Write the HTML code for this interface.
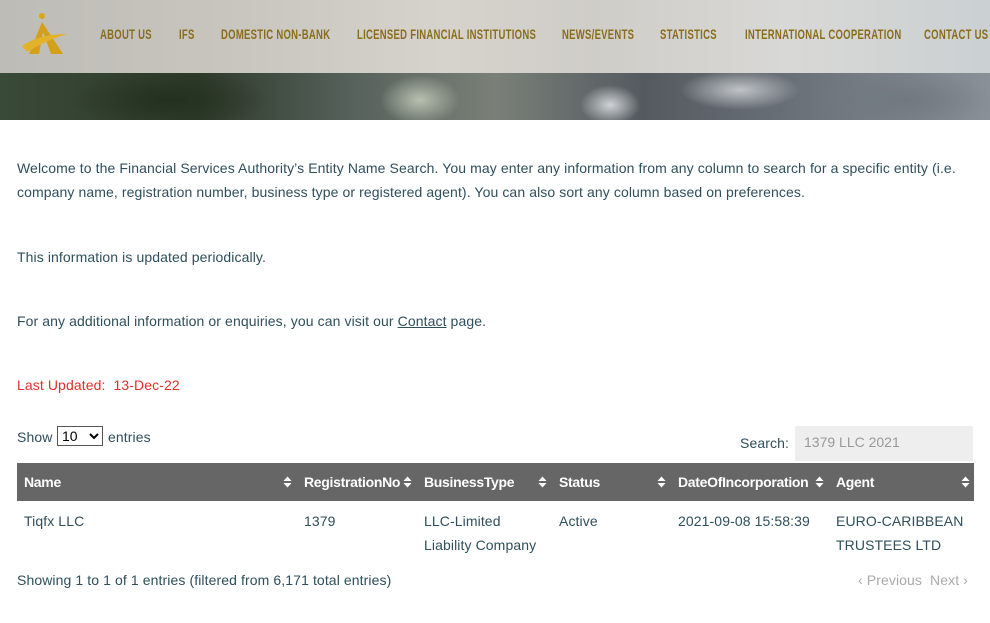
<!DOCTYPE html>
<html><head><meta charset="utf-8"><style>
*{margin:0;padding:0;box-sizing:border-box}
body{width:990px;height:623px;overflow:hidden;background:#fff;font-family:"Liberation Sans",sans-serif;color:#2f4f5c;font-size:14px;position:relative}
.hdr{position:absolute;left:0;top:0;width:990px;height:120px;overflow:hidden;
background:
radial-gradient(ellipse 40px 25px at 420px 100px,#b8c0b0 0,transparent 100%),
radial-gradient(ellipse 30px 20px at 610px 105px,#d0d4d8 0,transparent 100%),
radial-gradient(ellipse 60px 20px at 740px 90px,#c0c4c8 0,transparent 100%),
radial-gradient(ellipse 100px 30px at 170px 100px,#24301f 0,transparent 100%),
radial-gradient(ellipse 90px 30px at 900px 100px,#707880 0,transparent 100%),
linear-gradient(90deg,#3a4a38 0,#2e3a2a 20%,#55605a 35%,#7a8078 50%,#555a60 65%,#6a7078 80%,#8a9098 100%)}
.ov{position:absolute;left:0;top:0;width:990px;height:73px;background:
linear-gradient(90deg,#bdbcb6 0,#c9c6bf 25%,#d6d3cc 45%,#cfcdc8 60%,#d8d8d6 80%,#cbd0d2 100%)}
.nav{position:absolute;top:26px;font-family:"Liberation Sans",sans-serif;font-size:14px;font-weight:bold;color:#8a6d1c;letter-spacing:0.4px;transform:scaleX(0.68);transform-origin:left;white-space:nowrap}
p{position:absolute;left:17px;line-height:24px;font-size:14px;letter-spacing:0.1px}
a{color:#2f4f5c}
.red{color:#e0302a}
select{position:absolute;left:57px;top:426px;width:46px;height:20px;font-size:14px;border:1px solid #555;background:#fff;font-family:"Liberation Sans",sans-serif}
.th{position:absolute;left:17px;top:463px;width:957px;height:38px;background:#666}
.th span{position:absolute;top:11px;color:#fff;font-weight:bold;font-size:14px;letter-spacing:-0.3px}
.th svg{position:absolute;top:13px}
.td{position:absolute;font-size:14px;line-height:24px;letter-spacing:0.1px}
.gray{color:#aaa}
</style></head><body>
<div class="hdr"><div class="ov"></div>
<svg style="position:absolute;left:17px;top:12px" width="52" height="44" viewBox="0 0 52 44"><circle cx="25" cy="4" r="3" fill="#d8a81c"/><path d="M25 10 L12 42 L22 42 L26 20 L34 42 L46 42 Z" fill="#d4a01a"/><path d="M5 34 Q22 22 50 22 Q30 28 10 40 Z" fill="#e2b22a"/></svg>
<div class="nav" style="left:100px">ABOUT US</div>
<div class="nav" style="left:179px">IFS</div>
<div class="nav" style="left:221px">DOMESTIC NON-BANK</div>
<div class="nav" style="left:357px">LICENSED FINANCIAL INSTITUTIONS</div>
<div class="nav" style="left:562px">NEWS/EVENTS</div>
<div class="nav" style="left:660px">STATISTICS</div>
<div class="nav" style="left:745px">INTERNATIONAL COOPERATION</div>
<div class="nav" style="left:924px">CONTACT US</div>
</div>
<p style="top:156px;width:960px">Welcome to the Financial Services Authority’s Entity Name Search. You may enter any information from any column to search for a specific entity (i.e. company name, registration number, business type or registered agent). You can also sort any column based on preferences.</p>
<p style="top:245px">This information is updated periodically.</p>
<p style="top:309px">For any additional information or enquiries, you can visit our <a href="#">Contact</a> page.</p>
<p class="red" style="top:373px">Last Updated:&nbsp; 13-Dec-22</p>
<p style="top:425px">Show</p><select><option>10</option></select><p style="left:108px;top:425px">entries</p>
<p style="left:740px;top:431px">Search:</p>
<div style="position:absolute;left:795px;top:426px;width:178px;height:35px;background:#eee;color:#999;padding:8px 9px;font-size:14px">1379 LLC 2021</div>
<div class="th">
<span style="left:7px">Name</span>
<span style="left:287px">RegistrationNo</span>
<span style="left:407px">BusinessType</span>
<span style="left:542px">Status</span>
<span style="left:661px">DateOfIncorporation</span>
<span style="left:819px">Agent</span>
<svg style="left:266px" width="9" height="12" viewBox="0 0 9 12"><path d="M0.5 5 L4.5 0.5 L8.5 5Z M0.5 7 L4.5 11.5 L8.5 7Z" fill="#fff"/></svg>
<svg style="left:386px" width="9" height="12" viewBox="0 0 9 12"><path d="M0.5 5 L4.5 0.5 L8.5 5Z M0.5 7 L4.5 11.5 L8.5 7Z" fill="#fff"/></svg>
<svg style="left:521px" width="9" height="12" viewBox="0 0 9 12"><path d="M0.5 5 L4.5 0.5 L8.5 5Z M0.5 7 L4.5 11.5 L8.5 7Z" fill="#fff"/></svg>
<svg style="left:640px" width="9" height="12" viewBox="0 0 9 12"><path d="M0.5 5 L4.5 0.5 L8.5 5Z M0.5 7 L4.5 11.5 L8.5 7Z" fill="#fff"/></svg>
<svg style="left:798px" width="9" height="12" viewBox="0 0 9 12"><path d="M0.5 5 L4.5 0.5 L8.5 5Z M0.5 7 L4.5 11.5 L8.5 7Z" fill="#fff"/></svg>
<svg style="left:944px" width="9" height="12" viewBox="0 0 9 12"><path d="M0.5 5 L4.5 0.5 L8.5 5Z M0.5 7 L4.5 11.5 L8.5 7Z" fill="#fff"/></svg>
</div>
<div class="td" style="left:24px;top:509px">Tiqfx LLC</div>
<div class="td" style="left:304px;top:509px">1379</div>
<div class="td" style="left:424px;top:509px">LLC-Limited<br>Liability Company</div>
<div class="td" style="left:559px;top:509px">Active</div>
<div class="td" style="left:678px;top:509px">2021-09-08 15:58:39</div>
<div class="td" style="left:836px;top:509px">EURO-CARIBBEAN<br>TRUSTEES LTD</div>
<p style="top:568px">Showing 1 to 1 of 1 entries (filtered from 6,171 total entries)</p>
<p class="gray" style="left:858px;top:568px">‹ Previous&nbsp; Next ›</p>
</body></html>
